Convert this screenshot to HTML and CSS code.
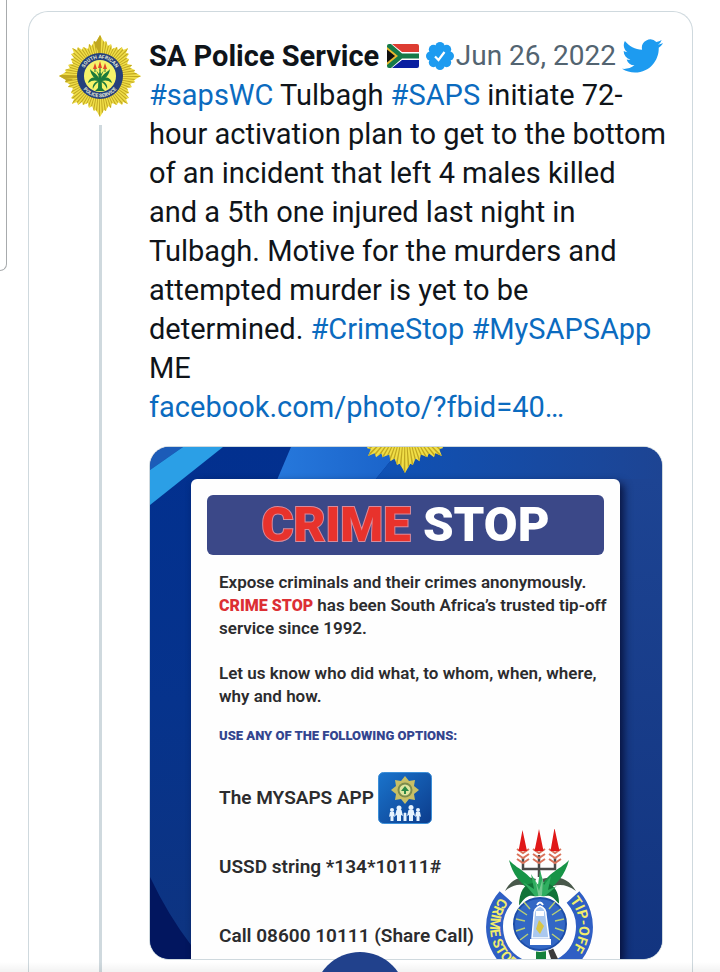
FILE: index.html
```html
<!DOCTYPE html>
<html lang="en">
<head>
<meta charset="utf-8">
<meta name="viewport" content="width=device-width, initial-scale=1">
<title>SA Police Service</title>
<link rel="stylesheet" href="styles.css">
</head>
<body>
<svg class="defs" aria-hidden="true">
  <defs>
    <clipPath id="star"><polygon points="41,0 34,4 35,6 30,8 32,11 27,12 29,17 26,18 29,22 26,23 28,28 23,26 22,29 18,26 17,29 12,27 11,32 8,30 6,35 4,34 0,41 -4,34 -6,35 -8,30 -11,32 -12,27 -17,29 -18,26 -22,29 -23,26 -28,28 -26,23 -29,22 -26,18 -29,17 -27,12 -32,11 -30,8 -35,6 -34,4 -41,0 -34,-4 -35,-6 -30,-8 -32,-11 -27,-12 -29,-17 -26,-18 -29,-22 -26,-23 -28,-28 -23,-26 -22,-29 -18,-26 -17,-29 -12,-27 -11,-32 -8,-30 -6,-35 -4,-34 0,-41 4,-34 6,-35 8,-30 11,-32 12,-27 17,-29 18,-26 22,-29 23,-26 28,-28 26,-23 29,-22 26,-18 29,-17 27,-12 32,-11 30,-8 35,-6 34,-4"/></clipPath>
    <symbol id="burst" viewBox="-41 -41 82 82">
      <g clip-path="url(#star)">
        <rect x="-41" y="-41" width="82" height="82" fill="#f0de48"/>
        <circle r="21" fill="none" stroke="#c0a722" stroke-width="42" pathLength="144" stroke-dasharray="0.8 1.2"/>
      </g>
    </symbol>
  </defs>
</svg>

<div class="side-panel"></div>

<main class="card">
  <div class="rail">
    <svg class="avatar" viewBox="-41 -41 82 82" role="img" aria-label="SA Police Service badge">
      <use href="#burst" x="-41" y="-41" width="82" height="82"/>
      <circle r="23" fill="#24407c"/>
      <circle r="16" fill="#f6f36a"/>
      <path id="ring-top" d="M-17 5A17.700 17.700 0 1 1 17 5" fill="none"/>
      <path id="ring-bottom" d="M-21 4A21.400 21.400 0 0 0 21 4" fill="none"/>
      <text class="ring-text"><textPath href="#ring-top" startOffset="50%" text-anchor="middle">SOUTH AFRICAN</textPath></text>
      <text class="ring-text"><textPath href="#ring-bottom" startOffset="50%" text-anchor="middle">POLICE SERVICE</textPath></text>
      <g fill="#1c7a3c">
        <path d="M-1.500 0H1.500L2 12L5 15H-5L-2 12Z"/>
        <path d="M0 4C-3 -3 -8 -4 -10 -7C-9 0 -5 3 0 5C5 3 9 0 10 -7C8 -4 3 -3 0 4Z"/>
        <path d="M0 3C-6 0 -11 2 -12 7C-8 4 -5 4 -2 5C-6 6 -8 10 -7 13C-5 8 -3 7 0 5C3 7 5 8 7 13C8 10 6 6 2 5C5 4 8 4 12 7C11 2 6 0 0 3Z"/>
        <path d="M0 3L-4 -6L-1 -2L0 -8L1 -2L4 -6Z"/>
      </g>
      <path d="M-5 -4V-8M0 -5V-10M5 -4V-8" stroke="#1c7a3c" stroke-width="1"/>
      <path d="M-5 -13L-3 -7H-7ZM0 -15L2 -8H-2ZM5 -13L7 -7H3Z" fill="#e0492b"/>
    </svg>
    <div class="thread"></div>
  </div>

  <article class="tweet">
    <header class="head">
      <strong class="name">SA Police Service</strong>
      <svg class="flag" viewBox="0 0 32 24" role="img" aria-label="South Africa">
        <clipPath id="fl"><rect width="32" height="24" rx="2"/></clipPath>
        <g clip-path="url(#fl)">
          <rect width="32" height="24" fill="#fff"/>
          <path d="M5 0H32V8H15Z" fill="#dd3c32"/>
          <path d="M5 24H32V16H15Z" fill="#0a1fa0"/>
          <path d="M0 0H4L15 9.500H32V14.500H15L4 24H0Z" fill="#157a48"/>
          <path d="M0 3L11 12L0 21Z" fill="#e9b92f"/>
          <path d="M0 5.500L8 12L0 18.500Z" fill="#111"/>
        </g>
      </svg>
      <svg class="verified" viewBox="0 0 28 28" role="img" aria-label="Verified">
        <g fill="#1d9bf0"><circle cx="14" cy="14" r="11"/><circle cx="14" cy="4.600" r="4.600"/><circle cx="14" cy="23.400" r="4.600"/><circle cx="4.600" cy="14" r="4.600"/><circle cx="23.400" cy="14" r="4.600"/><circle cx="7.400" cy="7.400" r="4.600"/><circle cx="20.600" cy="7.400" r="4.600"/><circle cx="7.400" cy="20.600" r="4.600"/><circle cx="20.600" cy="20.600" r="4.600"/></g>
        <path d="M9 14.500L12.500 18L18.500 10" fill="none" stroke="#fff" stroke-width="2.200"/>
      </svg>
      <time class="date" datetime="2022-06-26">Jun 26, 2022</time>
      <svg class="bird" viewBox="0 2 24 20" role="img" aria-label="Twitter"><path fill="#1d9bf0" d="M23.953 4.570a10 10 0 01-2.825.775 4.958 4.958 0 002.163-2.723c-.951.555-2.005.959-3.127 1.184a4.920 4.920 0 00-8.384 4.482C7.690 8.095 4.067 6.130 1.640 3.162a4.822 4.822 0 00-.666 2.475c0 1.710.87 3.213 2.188 4.096a4.904 4.904 0 01-2.228-.616v.06a4.923 4.923 0 003.946 4.827 4.996 4.996 0 01-2.212.085 4.936 4.936 0 004.604 3.417 9.867 9.867 0 01-6.102 2.105c-.39 0-.779-.023-1.170-.067a13.995 13.995 0 007.557 2.209c9.053 0 13.998-7.496 13.998-13.985 0-.21 0-.42-.015-.63A9.935 9.935 0 0024 4.590z"/></svg>
    </header>

    <p class="text"><a href="#">#sapsWC</a> Tulbagh <a href="#">#SAPS</a> initiate 72-<br>hour activation plan to get to the bottom<br>of an incident that left 4 males killed<br>and a 5th one injured last night in<br>Tulbagh. Motive for the murders and<br>attempted murder is yet to be<br>determined. <a href="#">#CrimeStop</a> <a href="#">#MySAPSApp</a><br>ME<br><a href="#">facebook.com/photo/?fbid=40…</a></p>

    <section class="poster">
      <svg class="backdrop" viewBox="0 0 512 512" preserveAspectRatio="none" aria-hidden="true">
        <defs>
          <linearGradient id="left" x2="0" y2="1"><stop stop-color="#02308f"/><stop offset="0.500" stop-color="#06338c"/><stop offset="1" stop-color="#0e3480"/></linearGradient>
          <linearGradient id="mid"><stop stop-color="#2678dc"/><stop offset="1" stop-color="#1a62c8"/></linearGradient>
          <linearGradient id="top"><stop stop-color="#0f52b6"/><stop offset="1" stop-color="#1d4493"/></linearGradient>
          <linearGradient id="right" x2="0" y2="1"><stop stop-color="#1d4493"/><stop offset="1" stop-color="#12347f"/></linearGradient>
        </defs>
        <rect width="512" height="512" fill="url(#left)"/>
        <path d="M0 0H33L0 23Z" fill="#1c5cb8"/>
        <path d="M33 0H73L0 58V23Z" fill="#2b9fe6"/>
        <path d="M141 0H252L225 33H127Z" fill="url(#mid)"/>
        <path d="M252 0H512V33H225Z" fill="url(#top)"/>
        <rect x="460" y="32" width="52" height="480" fill="url(#right)"/>
        <path d="M0 430Q18 468 41 498V512H0Z" fill="#02165f"/>
        <use href="#burst" x="201" y="-82" width="108" height="108"/>
      </svg>
      <div class="sheet">
        <h2 class="banner"><span class="red">CRIME</span> STOP</h2>
        <div class="copy">
          <p>Expose criminals and their crimes anonymously.<br><b class="stop">CRIME STOP</b> has been South Africa’s trusted tip-off<br>service since 1992.</p>
          <p>Let us know who did what, to whom, when, where,<br>why and how.</p>
          <h3 class="options">USE ANY OF THE FOLLOWING OPTIONS:</h3>
          <ul class="ways">
            <li>The MYSAPS APP
              <svg class="app" viewBox="0 0 54 52" aria-hidden="true">
                <defs><linearGradient id="ap" x2="1" y2="1"><stop stop-color="#1a74cc"/><stop offset="1" stop-color="#0c3c8c"/></linearGradient></defs>
                <rect x="0.500" y="0.500" width="53" height="51" rx="5" fill="url(#ap)" stroke="#3c8fd8"/>
                <g transform="translate(27 18)"><path d="M0-14L4-9L10-10L9-4L14 0L9 4L10 10L4 9L0 14L-4 9L-10 10L-9 4L-14 0L-9-4L-10-10L-4-9Z" fill="#c8bf66"/><circle r="7.500" fill="#7d8c4c"/><circle r="5.500" fill="#dfe6a0"/><path d="M0-4L4 1L1 1V4H-1V1H-4Z" fill="#2d8845"/></g>
                <g fill="#e6f4ff"><circle cx="14" cy="38" r="2"/><path d="M12 40H16L17 45L15.500 44V49H12.500V44L11 45Z"/><circle cx="21" cy="36" r="2.500"/><path d="M18.500 38H23.500L25 44L23 43V49H19V43L17 44Z"/><circle cx="27" cy="42" r="1.500"/><path d="M25.500 43H28.500V49H25.500Z"/><circle cx="33" cy="35.500" r="2.500"/><path d="M30.500 38H35.500L37 44L35 43V49H31V43L29 44Z"/><circle cx="40" cy="38" r="2"/><path d="M38 40H42L43 45L41.500 44V49H38.500V44L37 45Z"/></g>
              </svg>
            </li>
            <li>USSD string *134*10111#</li>
            <li>Call 08600 10111 (Share Call)</li>
          </ul>
        </div>
      </div>
      <svg class="crest" viewBox="0 0 108 130" role="img" aria-label="Crime Stop tip-off crest">
        <path d="M20 68A45 45 0 0 0 33 138" fill="none" stroke="#2f5fc4" stroke-width="17"/>
        <path d="M87 68A45 45 0 0 1 74 138" fill="none" stroke="#2f5fc4" stroke-width="17"/>
        <path id="arc-left" d="M16 66A49 49 0 0 0 53 147" fill="none"/>
        <path id="arc-right" d="M83 71A40 40 0 0 1 53 138" fill="none"/>
        <text class="crest-text"><textPath href="#arc-left" startOffset="3">CRIME STOP</textPath></text>
        <text class="crest-text"><textPath href="#arc-right" startOffset="1">TIP-OFF</textPath></text>
        <path d="M50 118H60V130H50Z" fill="#16813c"/><path d="M61 118L66 117L72 130H65Z" fill="#3b3b3b"/>
        <path d="M37 28V40H69V28M53 26V48" fill="none" stroke="#4a4a48" stroke-width="2.500"/>
        <path d="M31 20L37 24L43 20M31 25L37 29L43 25M31 30L37 34L43 30M47 20L53 24L59 20M47 25L53 29L59 25M47 30L53 34L59 30M63 20L69 24L75 20M63 25L69 29L75 25M63 30L69 34L75 30" fill="none" stroke="#d9745c" stroke-width="2"/>
        <path d="M36.500 1L41 22H32.500ZM53 0L57.500 22H48.500ZM68.500 -1L73.500 22H64.500Z" fill="#e01818"/>
        <path d="M50 50C38 46 26 48 19 62C30 53 38 55 46 60ZM56 50C70 46 82 48 90 62C79 54 70 55 60 60Z" fill="#48584a"/>
        <g fill="#179447">
          <path d="M52 66C34 56 26 44 23 31C33 42 46 43 54 66Z"/>
          <path d="M54 66C71 57 79 46 83 31C73 42 59 43 52 66Z"/>
          <path d="M53 56C42 50 33 59 33 77C41 63 48 66 53 70C58 66 67 63 73 77C74 60 64 50 53 56Z" fill="#117338"/>
          <path d="M53 72L37 53L48 60L45 45L52 56L54 41L58 56L65 47L62 61L71 57Z" fill="#2fae60"/>
        </g>
        <path d="M53 70L49 50L53 62L57 48L56 66Z" fill="#74c890"/>
        <circle cx="54" cy="95" r="28" fill="#fff"/>
        <circle cx="54" cy="95" r="26" fill="#3267c5" stroke="#1d4da8" stroke-width="2"/>
        <path d="M41 86L32 80M39 92L30 90M39 99L30 102M42 105L34 111M44 80L38 73M66 86L75 80M69 92L78 90M69 99L78 102M66 105L74 111M63 80L69 73" stroke="#b9cf74" stroke-width="1.500"/>
        <path d="M46 109L48 86Q48 79 54 77Q60 79 60 86L63 109Z" fill="#aac8ef" stroke="#fff" stroke-width="1.500"/>
        <path d="M44 110H65V116H44ZM50 82H58V87H50Z" fill="#fff"/><path d="M53 91L58 97L54 105L50 100Z" fill="#d8c545"/><path d="M51 76Q54 71 57 76" fill="none" stroke="#fff" stroke-width="2"/>
      </svg>
    </section>
  </article>
</main>
<div class="dock"><button class="fab" type="button" aria-label="Menu"></button></div>
</body>
</html>
```
FILE: styles.css
```css
* { box-sizing: border-box; }

body {
  margin: 0;
  height: 100vh;
  overflow: hidden;
  position: relative;
  display: flex;
  background: #fff;
  color: #0f1419;
  font-family: Roboto, "Liberation Sans", sans-serif;
}

p, h2, h3, ul { margin: 0; padding: 0; }
a { color: #0b6bbf; text-decoration: none; }

.defs { position: absolute; width: 0; height: 0; }

.side-panel {
  position: absolute;
  left: 0;
  top: 0;
  width: 7px;
  height: 271px;
  border: 1px solid #a8abad;
  border-width: 0 1px 1px 0;
  border-radius: 0 0 10px 0;
}

.card {
  flex: 1;
  min-width: 0;
  display: flex;
  gap: 8px;
  margin: 11px 27px 0 28px;
  padding: 23px 29px 0 30px;
  border: 1px solid #cfd9de;
  border-bottom: 0;
  border-radius: 20px 20px 0 0;
}

.rail {
  display: flex;
  flex-direction: column;
  align-items: center;
  gap: 8px;
}
.avatar { display: block; width: 82px; height: 82px; }
.thread { flex: 1; width: 3px; background: #cfd9de; }
.ring-text { font: 700 5px Roboto, sans-serif; fill: #e8ecd8; }

.tweet { flex: 1; min-width: 0; }

.head {
  display: flex;
  align-items: center;
  height: 41px;
  font-size: 29px;
  line-height: 40px;
  white-space: nowrap;
}
.name { font-weight: 700; }
.flag { flex: none; width: 32px; height: 24px; margin-left: 8px; }
.verified { flex: none; width: 28px; height: 28px; margin-left: 7px; }
.date { margin-left: auto; color: #536471; font-size: 28px; }
.bird { flex: none; width: 41px; height: 34px; margin-left: 6px; }

.text {
  font-size: 29px;
  line-height: 39px;
  white-space: nowrap;
}

.poster {
  position: relative;
  display: flex;
  aspect-ratio: 1;
  margin-top: 19px;
  padding: 32px 42px 0 41px;
  border: 1px solid #cfd9de;
  border-radius: 20px;
  overflow: hidden;
}
.backdrop { position: absolute; inset: 0; width: 100%; height: 100%; }

.sheet {
  position: relative;
  flex: 1;
  min-width: 0;
  padding: 16px 16px 0;
  border-radius: 6px 6px 0 0;
  background: #fefefe;
  box-shadow: 4px 4px 8px rgba(0, 0, 30, 0.7);
}
.banner {
  border-radius: 6px;
  background: #3b4888;
  color: #fff;
  font-size: 49px;
  font-weight: 900;
  line-height: 60px;
  text-align: center;
}
.red {
  color: #e8322c;
  -webkit-text-stroke: 2px #d98a9a;
  paint-order: stroke fill;
}

.copy {
  padding: 16px 0 0 12px;
  color: #2c2c2e;
  font-size: 17px;
  font-weight: 600;
  line-height: 23px;
  white-space: nowrap;
}
.copy p + p { margin-top: 22px; }
.stop { color: #dc2f34; font-size: 16px; font-weight: 900; }
.options {
  margin-top: 16px;
  color: #33458f;
  font-size: 13px;
  font-weight: 900;
  line-height: 24px;
}
.ways { margin-top: 15px; list-style: none; font-size: 19px; }
.ways li { display: flex; align-items: center; gap: 4px; height: 69px; }
.app { width: 54px; height: 52px; }

.crest { position: absolute; right: 68px; bottom: 0; width: 108px; height: 130px; }
.crest-text { font: 700 14px Roboto, sans-serif; fill: #f2ee6a; }

.dock {
  position: absolute;
  inset: auto 0 0 0;
  display: flex;
  justify-content: center;
  height: 20px;
  overflow: hidden;
  background: linear-gradient(rgba(0, 0, 0, 0) 50%, rgba(0, 0, 0, 0.05));
}
.fab {
  flex: none;
  width: 92px;
  height: 92px;
  padding: 0;
  border: 0;
  border-radius: 50%;
  background: #21418c;
}
```
